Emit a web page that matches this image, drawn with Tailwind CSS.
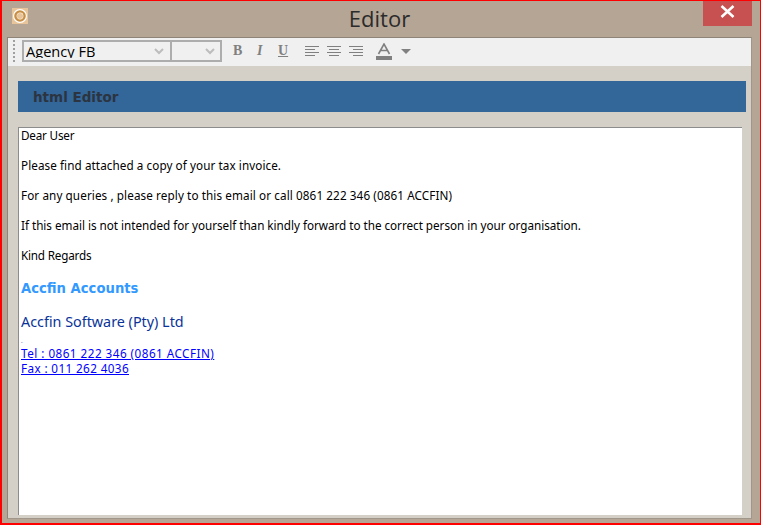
<!DOCTYPE html>
<html lang="en">
  <head>
    <meta charset="UTF-8" />
    <title>Editor</title>
    <script src="https://cdn.jsdelivr.net/npm/@tailwindcss/browser@4"></script>
  </head>
  <body class="overflow-hidden">
    <!-- Window -->
    <div class="w-[761px] h-[525px] flex flex-col border border-[#ff0000] border-l-2 border-b-2 bg-[#b5a595] font-['Noto_Sans',sans-serif]">
      <!-- Title bar -->
      <div class="h-[36px] shrink-0 flex items-start relative">
        <svg class="ml-[10px] mt-[7px] w-4 h-4" viewBox="0 0 16 16">
          <rect width="16" height="16" fill="#e8c49a" />
          <circle cx="8" cy="8" r="5" fill="none" stroke="#fff" stroke-width="4" />
          <circle cx="8" cy="8" r="4.6" fill="none" stroke="#c98f45" stroke-width="2.4" />
        </svg>
        <div class="flex-1 text-center text-[#2b2b2b] text-[22px] leading-[26px] mt-[4px] pl-[28px] font-['Open_Sans',sans-serif]">Editor</div>
        <div class="w-[49px] h-[25px] mr-[8px] bg-[#c75050] flex items-center justify-center">
          <svg class="w-[15px] h-[13px] mb-[5px]" viewBox="0 0 15 13">
            <path d="M1.5 1 L13.5 12 M13.5 1 L1.5 12" stroke="#fff" stroke-width="2.6" fill="none" />
          </svg>
        </div>
      </div>

      <!-- Client area -->
      <div class="ml-[5px] w-[745px] h-[482px] shrink-0 border border-[#a0968a] border-l-[#8f8478] border-t-[#8f8478] flex flex-col bg-[#d4d0c8]">
        <!-- Toolbar -->
        <div class="h-[28px] shrink-0 bg-[#f0f0f0] flex items-center pb-[2px]">
          <div class="ml-[5px] w-[2px] h-[22px] border-l-2 border-dotted border-[#a0a0a0]"></div>
          <div class="ml-[7px] w-[150px] h-[22px] border-2 border-[#adadad] flex items-center justify-between pr-[6px] pl-[2px] overflow-hidden">
            <span class="self-start h-[16px] overflow-hidden text-[14.6px] leading-[18px] text-black font-['Open_Sans',sans-serif]">Agency FB</span>
            <svg class="w-[10px] h-[7px]" viewBox="0 0 10 7"><path d="M1 1 L5 5 L9 1" fill="none" stroke="#bdbdbd" stroke-width="2" /></svg>
          </div>
          <div class="w-[50px] h-[22px] border-2 border-l-0 border-[#adadad] flex items-center justify-end pr-[5px]">
            <svg class="w-[10px] h-[7px]" viewBox="0 0 10 7"><path d="M1 1 L5 5 L9 1" fill="none" stroke="#bdbdbd" stroke-width="2" /></svg>
          </div>
          <span class="ml-[11px] w-[12px] text-[14px] leading-none font-bold text-[#808080] font-['Liberation_Serif',serif]">B</span>
          <span class="ml-[12px] w-[8px] text-[14px] leading-none font-bold italic text-[#808080] font-['Liberation_Serif',serif]">I</span>
          <span class="ml-[13px] w-[11px] text-[14px] leading-none font-bold underline text-[#808080] font-['Liberation_Serif',serif]">U</span>
          <!-- Align icons -->
          <svg class="ml-[16px] w-[15px] h-[11px]" viewBox="0 0 15 11" stroke="#808080"><path d="M0 .5h14M0 3.5h10M0 6.5h14M0 9.5h10" /></svg>
          <svg class="ml-[7px] w-[15px] h-[11px]" viewBox="0 0 15 11" stroke="#808080"><path d="M0 .5h14M2 3.5h10M0 6.5h14M2 9.5h10" /></svg>
          <svg class="ml-[7px] w-[15px] h-[11px]" viewBox="0 0 15 11" stroke="#808080"><path d="M0 .5h14M4 3.5h10M0 6.5h14M4 9.5h10" /></svg>
          <!-- Font colour -->
          <svg class="ml-[12px] w-[16px] h-[17px]" viewBox="0 0 16 17">
            <path d="M2.5 11 L8 1 L13.5 11 M5 7.5h6" fill="none" stroke="#808080" stroke-width="1.6" />
            <rect y="13" width="16" height="4" fill="#808080" />
          </svg>
          <svg class="ml-[9px] w-[10px] h-[5px]" viewBox="0 0 10 5"><path d="M0 0h10L5 5z" fill="#808080" /></svg>
        </div>

        <!-- Heading bar -->
        <div class="ml-[10px] mt-[15px] w-[728px] h-[31px] shrink-0 bg-[#336699] flex items-center pl-[15px]">
          <span class="text-[13.5px] mt-[1px] font-bold text-[#2b3440] font-['DejaVu_Sans',sans-serif]">html Editor</span>
        </div>

        <!-- Editor body -->
        <div class="ml-[10px] mt-[15px] w-[724px] flex-1 bg-white border-t border-l border-[#8c8c8c] pl-[2px] text-[11.7px] text-black">
          <p class="h-[15px] leading-[15px] tracking-[-0.2px]">Dear User</p>
          <p class="h-[15px] leading-[15px] mt-[15px] tracking-[0.08px]">Please find attached a copy of your tax invoice.</p>
          <p class="h-[15px] leading-[15px] mt-[15px] tracking-[0.1px]">For any queries , please reply to this email or call 0861 222 346 (0861 ACCFIN)</p>
          <p class="h-[15px] leading-[15px] mt-[15px] tracking-[-0.02px]">If this email is not intended for yourself than kindly forward to the correct person in your organisation.</p>
          <p class="h-[15px] leading-[15px] mt-[15px] tracking-[-0.2px]">Kind Regards</p>
          <p class="h-[18px] leading-[18px] mt-[17px] text-[13.2px] font-bold text-[#3399ff] font-['DejaVu_Sans',sans-serif]">Accfin Accounts</p>
          <p class="h-[18px] leading-[18px] mt-[15px] text-[14.35px] text-[#0a3399]">Accfin Software (Pty) Ltd</p>
          <p class="h-[6px] leading-[6px] mt-[7px] mb-[2px] text-[6px] text-[#0a3399]">.</p>
          <a class="block h-[15px] leading-[15px] underline text-[#0000ff] tracking-[0.48px]">Tel : 0861 222 346 (0861 ACCFIN)</a>
          <a class="block h-[15px] leading-[15px] underline text-[#0000ff] tracking-[0.39px]">Fax : 011 262 4036</a>
        </div>
        <div class="h-[3px] shrink-0"></div>
      </div>
    </div>
  </body>
</html>
